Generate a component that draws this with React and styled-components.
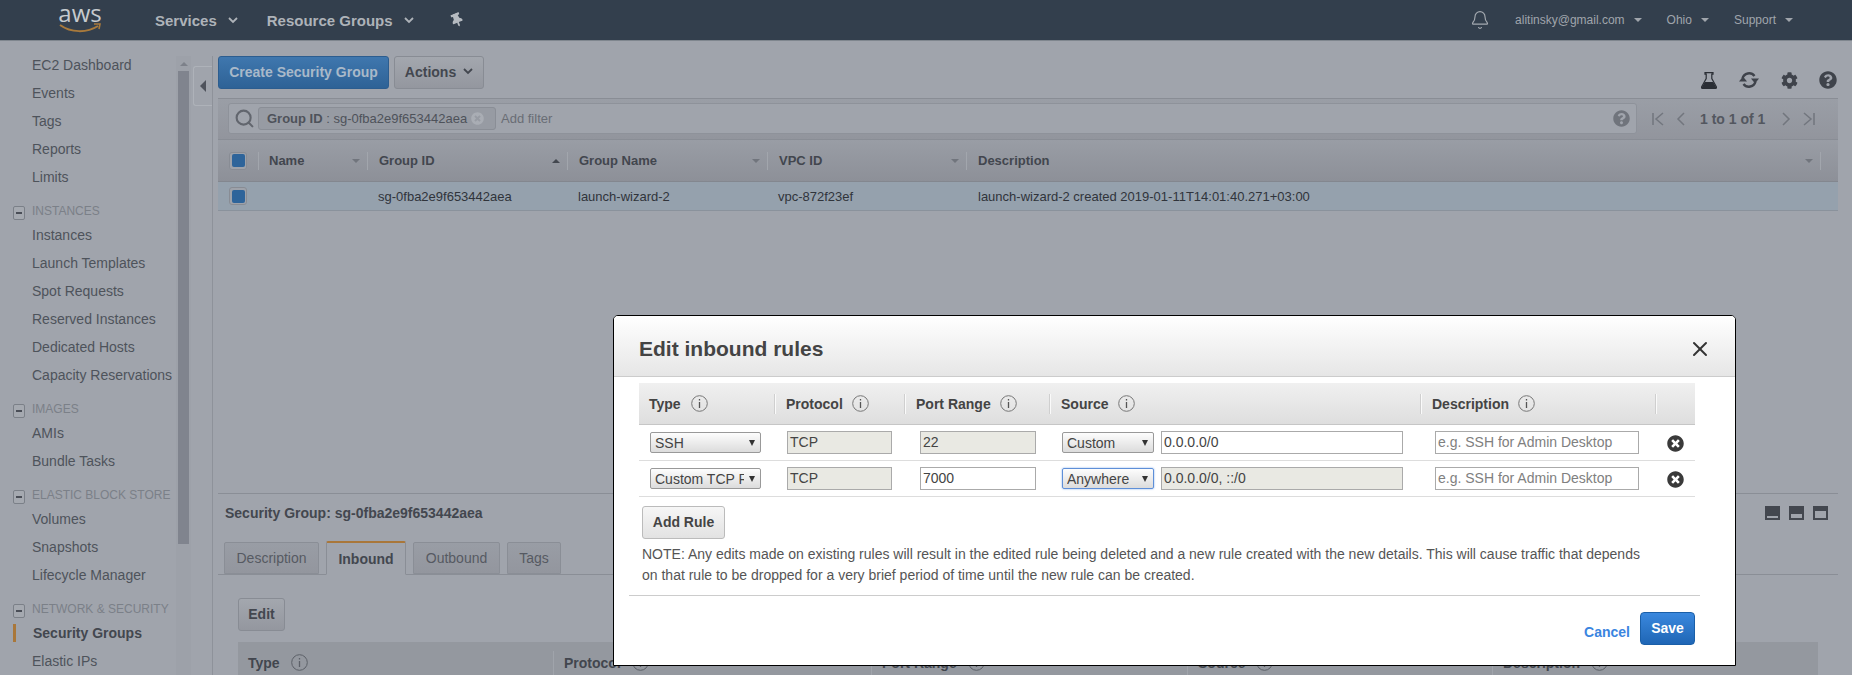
import React from "react";
import styled, { createGlobalStyle } from "styled-components";
import { FaCog, FaQuestionCircle, FaTimesCircle, FaThumbtack } from "react-icons/fa";
import { Bell, Search, X } from "lucide-react";

const Global = createGlobalStyle`
  html, body { margin: 0; padding: 0; background: #a0a4ac; }
  * { box-sizing: border-box; }
  body { font-family: "Liberation Sans", Arial, sans-serif; font-size: 14px; color: #4a4e57; }
`;

const Page = styled.div`
  position: relative;
  width: 1852px;
  height: 675px;
  overflow: hidden;
  background: #a0a4ac;
  display: flex;
  flex-direction: column;
`;

/* top bar */
const TopBar = styled.header`
  height: 41px;
  flex: none;
  display: flex;
  align-items: center;
  background: #333f4d;
  border-bottom: 1px solid #7f868e;
  padding-left: 59px;
  color: #aeb3b9;
`;
const Logo = styled.div`
  width: 42px;
  height: 40px;
  padding-top: 1px;
  position: relative;
  display: flex;
  justify-content: center;
`;
const LogoText = styled.span`
  font-family: "Open Sans", sans-serif;
  font-size: 24px;
  line-height: 24px;
  color: #c6cace;
`;
const Smile = styled.svg`
  position: absolute;
  left: 0;
  top: 23px;
`;
const NavItem = styled.span`
  font-weight: bold;
  font-size: 15px;
  margin-left: ${p => p.$ml}px;
`;
const ChevronIcon = styled.svg`
  margin-left: ${p => p.$ml}px;
  flex: none;
`;
const PinWrap = styled.span`
  margin-left: 36px;
  display: flex;
  transform: rotate(-22deg);
  color: #b5bac0;
`;
const Spacer = styled.div`
  flex: 1;
`;
const BellWrap = styled.span`
  display: flex;
  margin-right: 25px;
  color: #a4a9b0;
`;
const UserItem = styled.span`
  font-size: 12px;
  color: #a0a5ac;
  margin-left: ${p => p.$ml || 0}px;
`;
const Caret = styled.span`
  width: 0;
  height: 0;
  margin-left: ${p => p.$ml || 9}px;
  border-left: 4px solid transparent;
  border-right: 4px solid transparent;
  border-top: 4px solid #a0a5ac;
`;
const RightPad = styled.span`
  width: 59px;
`;

const Body = styled.div`
  flex: 1;
  display: flex;
  min-height: 0;
`;

/* side nav */
const Sidebar = styled.nav`
  width: 176px;
  flex: none;
  padding-top: 10px;
  overflow: hidden;
  white-space: nowrap;
`;
const NavLink = styled.div`
  height: 28px;
  line-height: 28px;
  padding-left: ${p => (p.$active ? 33 : 32)}px;
  font-size: 14px;
  font-weight: ${p => (p.$active ? "bold" : "normal")};
  color: ${p => (p.$active ? "#43474f" : "#4e535b")};
  position: relative;
`;
const ActiveMark = styled.i`
  position: absolute;
  left: 13px;
  top: 5px;
  width: 3px;
  height: 18px;
  background: #a9773a;
`;
const NavSection = styled.div`
  height: 20px;
  margin-top: 10px;
  display: flex;
  align-items: center;
  gap: 7px;
  padding-left: 13px;
  font-size: 12px;
  color: #7b8088;
`;
const Minus = styled.span`
  width: 12px;
  height: 14px;
  flex: none;
  margin-top: 3px;
  border: 1px solid #7b8088;
  border-radius: 2px;
  background: #a5a9b0;
  display: flex;
  align-items: center;
  justify-content: center;
  &::before {
    content: "";
    width: 6px;
    height: 2px;
    background: #4a4e57;
  }
`;

const ScrollTrack = styled.div`
  width: 15px;
  flex: none;
  margin-top: 15px;
  padding: 0 2px;
  background: #9da1a9;
  display: flex;
  flex-direction: column;
`;
const ScrollUp = styled.div`
  height: 15px;
  flex: none;
  display: flex;
  justify-content: center;
  align-items: center;
  &::before {
    content: "";
    border-left: 4px solid transparent;
    border-right: 4px solid transparent;
    border-bottom: 4px solid #7d818a;
  }
`;
const ScrollThumb = styled.div`
  height: 473px;
  background: #80848e;
`;

const ToggleCol = styled.div`
  width: 22px;
  flex: none;
  border-right: 1px solid #8e929a;
  margin-top: 15px;
  height: calc(100% - 15px);
  padding-top: 10px;
`;
const ToggleTab = styled.div`
  margin-left: 2px;
  height: 40px;
  border: 1px solid #aeb2b9;
  border-right: none;
  border-radius: 3px 0 0 3px;
  display: flex;
  align-items: center;
  justify-content: center;
  &::before {
    content: "";
    border-top: 6px solid transparent;
    border-bottom: 6px solid transparent;
    border-right: 6px solid #4f535c;
  }
`;

const Main = styled.main`
  width: 1620px;
  margin-left: 5px;
  flex: none;
  display: flex;
  flex-direction: column;
  min-width: 0;
`;
const Toolbar = styled.div`
  height: 42px;
  margin-top: 15px;
  display: flex;
  align-items: flex-start;
  gap: 5px;
  flex: none;
  position: relative;
`;
const BlueButton = styled.button`
  height: 33px;
  padding: 0 0 2px;
  width: ${p => p.$w}px;
  border: 1px solid #2c5d8f;
  border-radius: 3px;
  font: bold 14px "Liberation Sans", Arial, sans-serif;
  color: #a9b9c9;
  background: linear-gradient(#3f77ae, #2e6296);
`;
const GrayButton = styled.button`
  height: 33px;
  width: ${p => p.$w}px;
  padding: 0 0 2px;
  border: 1px solid #888c94;
  border-radius: 3px;
  font: bold 14px "Liberation Sans", Arial, sans-serif;
  color: #43474f;
  background: linear-gradient(#a3a7ae, #94979f);
  display: inline-flex;
  align-items: center;
  justify-content: center;
  gap: 7px;
`;
const ToolIcons = styled.div`
  position: absolute;
  top: 15px;
  left: 0;
  width: 1620px;
  display: flex;
  justify-content: flex-end;
  align-items: center;
  gap: 21px;
  color: #3f434b;
  padding-right: 1px;
`;

const FilterBar = styled.div`
  height: 42px;
  flex: none;
  display: flex;
  align-items: flex-start;
  padding: 4px 0 0 10px;
  background: linear-gradient(#9a9ea6, #92959d);
  border-top: 1px solid #898d95;
  border-bottom: 1px solid #898d95;
`;
const FilterInput = styled.div`
  width: 1409px;
  height: 31px;
  flex: none;
  display: flex;
  align-items: center;
  padding-left: 5px;
  background: #a0a4ac;
  border: 1px solid #8e929a;
  border-radius: 3px;
`;
const SearchWrap = styled.span`
  display: flex;
  color: #62666e;
  margin-right: 3px;
`;
const Pill = styled.div`
  width: 238px;
  height: 23px;
  flex: none;
  display: flex;
  align-items: center;
  padding-left: 8px;
  gap: 4px;
  background: #979ba3;
  border: 1px solid #8a8e96;
  border-radius: 3px;
  font-size: 13px;
  color: #4e525a;
  white-space: nowrap;
`;
const PillClose = styled.span`
  display: flex;
  color: #a9adb4;
`;
const AddFilter = styled.span`
  margin-left: 5px;
  font-size: 13px;
  color: #696d75;
  flex: 1;
`;
const HelpWrap = styled.span`
  display: flex;
  margin-right: 6px;
  color: #70747c;
`;
const Pager = styled.div`
  display: flex;
  align-items: center;
  height: 31px;
  margin-left: 14px;
  gap: 9px;
  color: #72767e;
`;
const PagerText = styled.span`
  font-weight: bold;
  font-size: 14px;
  color: #53575f;
  margin: 0 5px 0 3px;
`;

const gridCols = "40px 110px 200px 200px 199px 1fr";
const HeadRow = styled.div`
  height: 42px;
  flex: none;
  display: grid;
  grid-template-columns: ${gridCols};
  align-items: center;
  background: linear-gradient(#999da5, #8d9098);
  border-bottom: 1px solid #83878f;
`;
const HeadCell = styled.div`
  height: 18px;
  display: flex;
  align-items: center;
  justify-content: space-between;
  padding: 0 7px 0 ${p => (p.$first ? 10 : 11)}px;
  font-weight: bold;
  font-size: 13px;
  color: #42464e;
  border-right: 1px solid #a2a6ad;
  border-left: ${p => (p.$first ? "1px solid #a2a6ad" : "none")};
  margin-right: ${p => (p.$last ? 17 : 0)}px;
`;
const Sort = styled.span`
  border-left: 4px solid transparent;
  border-right: 4px solid transparent;
  ${p => (p.$up ? "border-bottom: 4px solid #43474f;" : "border-top: 4px solid #71757d;")}
`;
const CheckCell = styled.div`
  padding-left: 11px;
  display: flex;
`;
const CheckBox = styled.span`
  width: 18px;
  height: 18px;
  border: 1px solid #888c94;
  border-radius: 3px;
  background: #9ea2aa;
  display: flex;
  align-items: center;
  justify-content: center;
  &::before {
    content: "";
    width: 13px;
    height: 13px;
    border-radius: 2px;
    background: #2e649a;
  }
`;
const DataRow = styled.div`
  height: 29px;
  flex: none;
  display: grid;
  grid-template-columns: ${gridCols};
  align-items: center;
  background: #95a1ad;
  border-bottom: 1px solid #8a929c;
  font-size: 13px;
  color: #30343b;
`;
const DataCell = styled.div`
  padding-left: ${p => (p.$last ? 11 : 10)}px;
  white-space: nowrap;
`;
const TopPane = styled.div`
  flex: 1;
  min-height: 0;
`;
const Pane = styled.section`
  flex: none;
  height: 182px;
  border-top: 1px solid #8a8e96;
  position: relative;
`;
const PaneTitle = styled.h2`
  margin: 0;
  padding: 11px 0 0 7px;
  height: 48px;
  font-size: 14px;
  line-height: 17px;
  font-weight: bold;
  color: #43474f;
`;
const PaneIcons = styled.div`
  position: absolute;
  right: 10px;
  top: 12px;
  display: flex;
  gap: 9px;
`;
const Tabs = styled.div`
  height: 33px;
  display: flex;
  gap: 7px;
  padding-left: 6px;
  align-items: flex-end;
  border-bottom: 1px solid #8a8e96;
`;
const Tab = styled.div`
  width: ${p => p.$w}px;
  height: ${p => (p.$active ? 34 : 32)}px;
  display: flex;
  align-items: center;
  justify-content: center;
  font-size: 14px;
  border: 1px solid #8a8e96;
  border-radius: 2px 2px 0 0;
  ${p => (p.$active
    ? "font-weight:bold;color:#43474f;background:#a0a4ac;border-top:2px solid #a9773a;border-bottom-color:#a0a4ac;margin-bottom:-1px;"
    : "color:#565a62;background:linear-gradient(#999da5,#93969e);")}
`;
const EditBtn = styled(GrayButton)`
  margin: 23px 0 0 20px;
`;
const LowerHead = styled.div`
  position: absolute;
  left: 20px;
  width: 1580px;
  top: 148px;
  height: 42px;
  background: #94989f;
  display: grid;
  grid-template-columns: 315px 318px 316px 305px 1fr;
  align-items: center;
`;
const LowerCell = styled.div`
  padding-left: 10px;
  height: 24px;
  margin-top: -1px;
  display: flex;
  align-items: center;
  gap: 11px;
  font-weight: bold;
  font-size: 14px;
  color: #42464e;
  border-left: ${p => (p.$first ? "none" : "1px solid #a0a4ab")};
`;

/* modal */
const Modal = styled.div`
  position: absolute;
  left: 613px;
  top: 315px;
  width: 1123px;
  height: 351px;
  background: #fff;
  border: 1px solid #000;
  border-radius: 5px 5px 0 0;
  overflow: hidden;
  display: flex;
  flex-direction: column;
`;
const ModalHead = styled.div`
  height: 61px;
  flex: none;
  display: flex;
  align-items: center;
  justify-content: space-between;
  padding: 6px 23px 0 25px;
  background: linear-gradient(#fff, #e6e6e6);
  border-bottom: 1px solid #ccc;
`;
const ModalTitle = styled.h1`
  margin: 0;
  font-size: 21px;
  font-weight: bold;
  color: #444;
`;
const CloseWrap = styled.span`
  display: flex;
  color: #333;
`;
const ModalBody = styled.div`
  padding: 6px 40px 0 25px;
  flex: 1;
`;
const ruleCols = "136px 130px 145px 371px 235px 39px";
const RuleHead = styled.div`
  height: 42px;
  display: grid;
  grid-template-columns: ${ruleCols};
  align-items: center;
  background: linear-gradient(#f0f0f0, #dedede);
  border-bottom: 1px solid #c6c6c6;
`;
const RuleHeadCell = styled.div`
  height: 20px;
  display: flex;
  align-items: center;
  padding-left: 10px;
  border-left: ${p => (p.$first ? "none" : "1px solid #fafafa")};
  box-shadow: ${p => (p.$first ? "none" : "-1px 0 0 #cfcfcf")};
  font-weight: bold;
  font-size: 14px;
  color: #444;
`;
const InfoIcon = styled.svg`
  margin-left: ${p => p.$ml}px;
  flex: none;
`;
const RuleRow = styled.div`
  height: 36px;
  display: grid;
  grid-template-columns: ${ruleCols};
  align-items: center;
  border-bottom: 1px solid #ddd;
`;
const RuleCell = styled.div`
  padding-left: ${p => p.$pl}px;
  display: flex;
  align-items: center;
  gap: 7px;
`;
const SelectBox = styled.div`
  width: ${p => p.$w}px;
  height: 21px;
  padding: 0 4px;
  display: flex;
  align-items: center;
  justify-content: space-between;
  font-size: 14px;
  color: #444;
  white-space: nowrap;
  background: linear-gradient(#fdfdfd, #dcdcdc);
  border: 1px solid ${p => (p.$focus ? "#5e8fd8" : "#999")};
  border-radius: 2px;
  box-shadow: ${p => (p.$focus ? "0 0 2px #7aa7e8" : "none")};
`;
const SelectText = styled.span`
  overflow: hidden;
  flex: 1;
`;
const SelectArrow = styled.span`
  flex: none;
  width: 0;
  height: 0;
  margin: 1px 1px 0 5px;
  border-left: 3px solid transparent;
  border-right: 3px solid transparent;
  border-top: 6px solid #333;
`;
const TextBox = styled.div`
  width: ${p => p.$w}px;
  height: 23px;
  padding: 0 0 1px 2px;
  display: flex;
  align-items: center;
  font-size: 14px;
  white-space: nowrap;
  color: ${p => (p.$ph ? "#808080" : "#444")};
  background: ${p => (p.$off ? "#e9e9e3" : "#fff")};
  border: 1px solid #aaa;
`;
const RemoveWrap = styled.span`
  display: flex;
  padding-left: 11px;
  color: #3a3a3a;
  margin-top: 2px;
`;
const AddBtn = styled.button`
  display: block;
  margin: 9px 0 0 3px;
  width: 83px;
  height: 33px;
  padding: 0 0 2px;
  border: 1px solid #bbb;
  border-radius: 3px;
  background: linear-gradient(#f6f6f6, #e2e2e2);
  font: bold 14px "Liberation Sans", Arial, sans-serif;
  color: #444;
`;
const Note = styled.p`
  margin: 5px 0 0 3px;
  width: 1010px;
  font-size: 14px;
  line-height: 21px;
  color: #555;
`;
const Divider = styled.hr`
  margin: 9px -5px 0 -10px;
  border: none;
  border-top: 1px solid #ccc;
`;
const Footer = styled.div`
  margin-top: 16px;
  display: flex;
  justify-content: flex-end;
  align-items: flex-end;
  gap: 10px;
`;
const CancelLink = styled.a`
  font-weight: bold;
  font-size: 14px;
  color: #3a85e0;
  margin-bottom: 5px;
`;
const SaveBtn = styled.button`
  width: 55px;
  height: 33px;
  padding: 0 0 2px;
  border: 1px solid #1a5fa8;
  border-radius: 4px;
  background: linear-gradient(#3a88de, #1f66b5);
  font: bold 14px "Liberation Sans", Arial, sans-serif;
  color: #fff;
`;

const Chevron = ({ ml }) => (
  <ChevronIcon $ml={ml} width="10" height="7" viewBox="0 0 10 7" fill="none" stroke="#aeb3b9" strokeWidth="1.8">
    <path d="M1 1l4 4 4-4" />
  </ChevronIcon>
);
const Info = ({ ml }) => (
  <InfoIcon $ml={ml} width="17" height="17" viewBox="0 0 17 17" fill="none" stroke="#777">
    <circle cx="8.5" cy="8.5" r="7.8" />
    <path d="M8.5 7v6M8.5 4v1.6" strokeWidth="1.3" stroke="#555" />
  </InfoIcon>
);
const LowerInfo = () => (
  <InfoIcon $ml={0} width="17" height="17" viewBox="0 0 17 17" fill="none" stroke="#5c6068">
    <circle cx="8.5" cy="8.5" r="7.8" />
    <path d="M8.5 7v6M8.5 4v1.6" strokeWidth="1.3" />
  </InfoIcon>
);
const Flask = () => (
  <svg width="16" height="17" viewBox="0 0 16 17">
    <path d="M4 .7h8v1.4h-1.2v4.4L15.5 15c.3.8-.2 1.4-1 1.4H1.5c-.8 0-1.3-.6-1-1.4L5.2 6.5V2.1H4z" fill="none" stroke="#2a2e35" strokeWidth="1.2" />
    <path d="M3.8 10h8.4l3.2 5.4c.2.6-.2 1.1-.9 1.1H1.5c-.7 0-1.1-.5-.9-1.1z" fill="#2a2e35" />
  </svg>
);
const SyncIcon = () => (
  <svg width="22" height="18" viewBox="0 0 22 18" fill="none">
    <path d="M4.5 7.5A6.8 6.8 0 0 1 16.5 5" stroke="#3f434b" strokeWidth="2.4" />
    <path d="M13 7.6h8l-4 5z" fill="#3f434b" />
    <path d="M17.5 10.5A6.8 6.8 0 0 1 5.5 13" stroke="#3f434b" strokeWidth="2.4" />
    <path d="M1 10.4h8l-4-5z" fill="#3f434b" />
  </svg>
);
const PagerIcon = ({ d }) => (
  <svg width="14" height="16" viewBox="0 0 14 16" fill="none" stroke="#72767e" strokeWidth="1.5">
    <path d={d} />
  </svg>
);
const PanelIcon = ({ bar }) => (
  <svg width="15" height="14" viewBox="0 0 15 14">
    <rect width="15" height="14" fill="#43474f" />
    <rect x="2" y={bar[0]} width="11" height={bar[1]} fill="#a0a4ac" />
  </svg>
);

const Sections = [
  { items: ["EC2 Dashboard", "Events", "Tags", "Reports", "Limits"] },
  { title: "INSTANCES", items: ["Instances", "Launch Templates", "Spot Requests", "Reserved Instances", "Dedicated Hosts", "Capacity Reservations"] },
  { title: "IMAGES", items: ["AMIs", "Bundle Tasks"] },
  { title: "ELASTIC BLOCK STORE", items: ["Volumes", "Snapshots", "Lifecycle Manager"] },
  { title: "NETWORK & SECURITY", items: ["Security Groups", "Elastic IPs"] },
];

const Rule = ({ type, port, portOff, source, focus, cidr, cidrOff }) => (
  <RuleRow>
    <RuleCell $pl={11}><SelectBox $w={111}><SelectText>{type}</SelectText><SelectArrow /></SelectBox></RuleCell>
    <RuleCell $pl={12}><TextBox $w={105} $off>TCP</TextBox></RuleCell>
    <RuleCell $pl={15}><TextBox $w={116} $off={portOff}>{port}</TextBox></RuleCell>
    <RuleCell $pl={12}>
      <SelectBox $w={92} $focus={focus}><SelectText>{source}</SelectText><SelectArrow /></SelectBox>
      <TextBox $w={242} $off={cidrOff}>{cidr}</TextBox>
    </RuleCell>
    <RuleCell $pl={14}><TextBox $w={204} $ph>e.g. SSH for Admin Desktop</TextBox></RuleCell>
    <RemoveWrap><FaTimesCircle size={17} /></RemoveWrap>
  </RuleRow>
);

export default function App() {
  return (
    <Page>
      <Global />
      <TopBar>
        <Logo>
          <LogoText>aws</LogoText>
          <Smile width="42" height="10" viewBox="0 0 42 10" fill="none">
            <path d="M1 2c11 8 27 8 38 1" stroke="#a97a3c" strokeWidth="2" />
            <path d="M35 1l6 0-1 5" stroke="#a97a3c" strokeWidth="1.6" />
          </Smile>
        </Logo>
        <NavItem $ml={54}>Services</NavItem>
        <Chevron ml={11} />
        <NavItem $ml={29}>Resource Groups</NavItem>
        <Chevron ml={11} />
        <PinWrap><FaThumbtack size={14} /></PinWrap>
        <Spacer />
        <BellWrap><Bell size={20} strokeWidth={1.4} /></BellWrap>
        <UserItem>alitinsky@gmail.com</UserItem>
        <Caret />
        <UserItem $ml={25}>Ohio</UserItem>
        <Caret />
        <UserItem $ml={25}>Support</UserItem>
        <Caret />
        <RightPad />
      </TopBar>
      <Body>
        <Sidebar>
          {Sections.map((s, i) => (
            <div key={i}>
              {s.title && <NavSection><Minus />{s.title}</NavSection>}
              {s.items.map(it => (
                <NavLink key={it} $active={it === "Security Groups"}>
                  {it === "Security Groups" && <ActiveMark />}
                  {it}
                </NavLink>
              ))}
            </div>
          ))}
        </Sidebar>
        <ScrollTrack>
          <ScrollUp />
          <ScrollThumb />
        </ScrollTrack>
        <ToggleCol><ToggleTab /></ToggleCol>
        <Main>
          <TopPane>
            <Toolbar>
              <BlueButton $w={171}>Create Security Group</BlueButton>
              <GrayButton $w={90}>
                Actions
                <svg width="10" height="7" viewBox="0 0 10 7" fill="none" stroke="#43474f" strokeWidth="1.8"><path d="M1 1l4 4 4-4" /></svg>
              </GrayButton>
              <ToolIcons>
                <Flask />
                <SyncIcon />
                <FaCog size={17} />
                <FaQuestionCircle size={18} />
              </ToolIcons>
            </Toolbar>
            <FilterBar>
              <FilterInput>
                <SearchWrap><Search size={21} strokeWidth={2.4} /></SearchWrap>
                <Pill>
                  <span><b>Group ID</b> : sg-0fba2e9f653442aea</span>
                  <PillClose><FaTimesCircle size={13} /></PillClose>
                </Pill>
                <AddFilter>Add filter</AddFilter>
                <HelpWrap><FaQuestionCircle size={17} /></HelpWrap>
              </FilterInput>
              <Pager>
                <PagerIcon d="M2 2v12M12 2L5 8l7 6" />
                <PagerIcon d="M10 2L4 8l6 6" />
                <PagerText>1 to 1 of 1</PagerText>
                <PagerIcon d="M4 2l6 6-6 6" />
                <PagerIcon d="M12 2v12M2 2l7 6-7 6" />
              </Pager>
            </FilterBar>
            <HeadRow>
              <CheckCell><CheckBox /></CheckCell>
              <HeadCell $first>Name<Sort /></HeadCell>
              <HeadCell>Group ID<Sort $up /></HeadCell>
              <HeadCell>Group Name<Sort /></HeadCell>
              <HeadCell>VPC ID<Sort /></HeadCell>
              <HeadCell $last>Description<Sort /></HeadCell>
            </HeadRow>
            <DataRow>
              <CheckCell><CheckBox /></CheckCell>
              <DataCell />
              <DataCell>sg-0fba2e9f653442aea</DataCell>
              <DataCell>launch-wizard-2</DataCell>
              <DataCell>vpc-872f23ef</DataCell>
              <DataCell $last>launch-wizard-2 created 2019-01-11T14:01:40.271+03:00</DataCell>
            </DataRow>
          </TopPane>
          <Pane>
            <PaneTitle>Security Group: sg-0fba2e9f653442aea</PaneTitle>
            <PaneIcons>
              <PanelIcon bar={[10, 2]} />
              <PanelIcon bar={[8, 4]} />
              <PanelIcon bar={[5, 7]} />
            </PaneIcons>
            <Tabs>
              <Tab $w={95}>Description</Tab>
              <Tab $w={80} $active>Inbound</Tab>
              <Tab $w={87}>Outbound</Tab>
              <Tab $w={54}>Tags</Tab>
            </Tabs>
            <EditBtn $w={47}>Edit</EditBtn>
            <LowerHead>
              <LowerCell $first>Type <LowerInfo /></LowerCell>
              <LowerCell>Protocol <LowerInfo /></LowerCell>
              <LowerCell>Port Range <LowerInfo /></LowerCell>
              <LowerCell>Source <LowerInfo /></LowerCell>
              <LowerCell>Description <LowerInfo /></LowerCell>
            </LowerHead>
          </Pane>
        </Main>
      </Body>

      <Modal>
        <ModalHead>
          <ModalTitle>Edit inbound rules</ModalTitle>
          <CloseWrap><X size={24} strokeWidth={2} /></CloseWrap>
        </ModalHead>
        <ModalBody>
          <RuleHead>
            <RuleHeadCell $first>Type<Info ml={10} /></RuleHeadCell>
            <RuleHeadCell>Protocol<Info ml={9} /></RuleHeadCell>
            <RuleHeadCell>Port Range<Info ml={9} /></RuleHeadCell>
            <RuleHeadCell>Source<Info ml={10} /></RuleHeadCell>
            <RuleHeadCell>Description<Info ml={9} /></RuleHeadCell>
            <RuleHeadCell />
          </RuleHead>
          <Rule type="SSH" port="22" portOff source="Custom" cidr="0.0.0.0/0" />
          <Rule type="Custom TCP Rule" port="7000" source="Anywhere" focus cidr="0.0.0.0/0, ::/0" cidrOff />
          <AddBtn>Add Rule</AddBtn>
          <Note>NOTE: Any edits made on existing rules will result in the edited rule being deleted and a new rule created with the new details. This will cause traffic that depends on that rule to be dropped for a very brief period of time until the new rule can be created.</Note>
          <Divider />
          <Footer>
            <CancelLink>Cancel</CancelLink>
            <SaveBtn>Save</SaveBtn>
          </Footer>
        </ModalBody>
      </Modal>
    </Page>
  );
}
